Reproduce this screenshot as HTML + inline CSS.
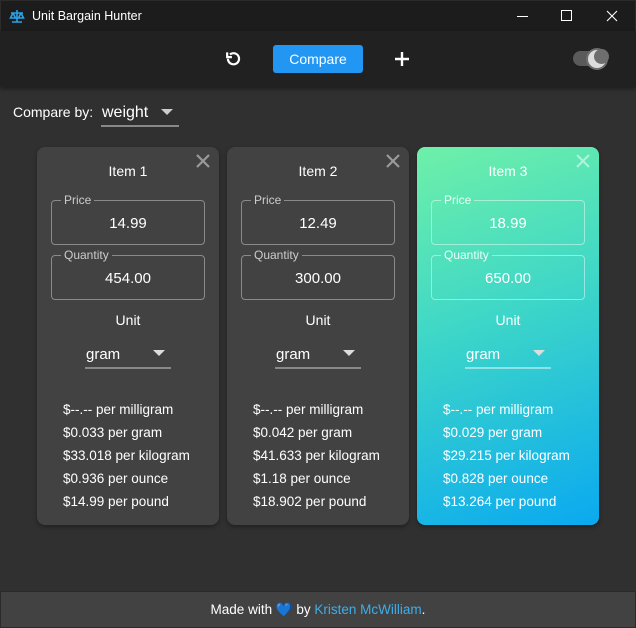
<!DOCTYPE html>
<html><head><meta charset="utf-8"><style>
*{box-sizing:border-box;margin:0;padding:0}
body{width:636px;height:628px;background:#303030;font-family:"Liberation Sans",sans-serif;color:#fff;position:relative;overflow:hidden}
.abs{position:absolute}
.title{left:0;top:0;width:636px;height:31px;background:#1c1c1c;border:1px solid #2b2b2b;border-bottom:none}
.tb{left:0;top:31px;width:636px;height:56px;background:#212121;box-shadow:0 2px 4px rgba(0,0,0,.4)}
.card{top:147px;width:182px;height:378px;background:#424242;border-radius:8px;box-shadow:0 2px 4px rgba(0,0,0,.35)}
.card.g{background:linear-gradient(160deg,#6ef0a8 0%,#3dd6c8 45%,#0aa9f0 100%)}
.card .h{position:absolute;top:16px;left:0;width:100%;text-align:center;font-size:14px}
.card .x{position:absolute;right:8px;top:6px;width:16px;height:16px}
fieldset.fld{position:absolute;left:14px;width:154px;height:51px;border:1px solid #8a8a8a;border-radius:4px;padding:0 8px;margin:0}
.g .fld{border-color:rgba(255,255,255,.45)}
.fld legend{font-size:12px;color:#ccc;padding:0 3px;line-height:12px;margin-left:1px}
.g .fld legend{color:#e8fff6}
.fld .v{position:absolute;top:9px;left:0;width:100%;text-align:center;font-size:15px}
.unit{position:absolute;top:165px;width:100%;text-align:center;font-size:14px}
.sel{position:absolute;left:48px;top:196px;width:86px;height:26px;border-bottom:2px solid #888;font-size:15px;padding-left:1px;padding-top:3px}
.g .sel{border-color:rgba(255,255,255,.45)}
.sel .ar{position:absolute;right:6px;top:7px;width:0;height:0;border-left:6px solid transparent;border-right:6px solid transparent;border-top:6px solid #ddd}
.res{position:absolute;left:26px;top:251px;font-size:13.5px;line-height:23px}
</style></head><body>
<div class="abs title">
 <svg class="abs" style="left:8px;top:8px" width="16" height="14" viewBox="0 0 16 14" fill="none" stroke="#2aa4ea" stroke-width="1.6"><path d="M8 1v12M3 13h10M2 4h12M4 4L1.5 9h5L4 4M12 4L9.5 9h5L12 4"/></svg>
 <div class="abs" style="left:31px;top:8px;font-size:12.5px">Unit Bargain Hunter</div>
 <div class="abs" style="left:516px;top:15px;width:11px;height:1px;background:#fff"></div>
 <div class="abs" style="left:560px;top:9px;width:11px;height:11px;border:1px solid #fff"></div>
 <svg class="abs" style="left:605px;top:9px" width="12" height="12" viewBox="0 0 12 12" stroke="#fff" stroke-width="1.1"><path d="M1 1l10 10M11 1L1 11"/></svg>
</div>
<div class="abs tb">
 <svg class="abs" style="left:224px;top:19px" width="19" height="19" viewBox="0 0 24 24" fill="none" stroke="#fff" stroke-width="2.8"><path d="M5 11a7 7 0 1 0 2.5-5.3"/><path d="M4 3v6h6" fill="none"/></svg>
 <div class="abs" style="left:273px;top:14px;width:90px;height:28px;background:#2196f3;border-radius:3px;text-align:center;line-height:28px;font-size:14px">Compare</div>
 <svg class="abs" style="left:394px;top:20px" width="16" height="16" stroke="#fff" stroke-width="2.4"><path d="M8 1v14M1 8h14"/></svg>
 <div class="abs" style="left:573px;top:20px;width:30px;height:15px;border-radius:8px;background:#5a5a5a"></div>
 <div class="abs" style="left:586px;top:17px;width:22px;height:22px;border-radius:50%;background:#6e6e6e"></div>
 <div class="abs" style="left:588px;top:19px;width:18px;height:18px;border-radius:50%;background:#ddd"></div>
 <div class="abs" style="left:594px;top:18px;width:15px;height:15px;border-radius:50%;background:#6e6e6e"></div>
</div>
<div class="abs" style="left:13px;top:104px;font-size:14px">Compare by:</div>
<div class="abs" style="left:101px;top:102px;width:78px;height:25px;border-bottom:2px solid #888;font-size:16px;padding-left:1px;padding-top:2px">weight<div class="abs" style="right:6px;top:7px;border-left:6px solid transparent;border-right:6px solid transparent;border-top:6px solid #ccc"></div></div>

<div class="abs card" style="left:37px">
 <div class="h">Item 1</div>
 <svg class="x" viewBox="0 0 16 16" stroke="#9a9a9a" stroke-width="2.2"><path d="M2 2l12 12M14 2L2 14"/></svg>
 <fieldset class="fld" style="top:47px"><legend>Price</legend><div class="v">14.99</div></fieldset>
 <fieldset class="fld" style="top:102px"><legend>Quantity</legend><div class="v">454.00</div></fieldset>
 <div class="unit">Unit</div>
 <div class="sel">gram<div class="ar"></div></div>
 <div class="res">$--.-- per milligram<br>$0.033 per gram<br>$33.018 per kilogram<br>$0.936 per ounce<br>$14.99 per pound</div>
</div>
<div class="abs card" style="left:227px">
 <div class="h">Item 2</div>
 <svg class="x" viewBox="0 0 16 16" stroke="#9a9a9a" stroke-width="2.2"><path d="M2 2l12 12M14 2L2 14"/></svg>
 <fieldset class="fld" style="top:47px"><legend>Price</legend><div class="v">12.49</div></fieldset>
 <fieldset class="fld" style="top:102px"><legend>Quantity</legend><div class="v">300.00</div></fieldset>
 <div class="unit">Unit</div>
 <div class="sel">gram<div class="ar"></div></div>
 <div class="res">$--.-- per milligram<br>$0.042 per gram<br>$41.633 per kilogram<br>$1.18 per ounce<br>$18.902 per pound</div>
</div>
<div class="abs card g" style="left:417px">
 <div class="h">Item 3</div>
 <svg class="x" viewBox="0 0 16 16" stroke="rgba(255,255,255,.5)" stroke-width="2.2"><path d="M2 2l12 12M14 2L2 14"/></svg>
 <fieldset class="fld" style="top:47px"><legend>Price</legend><div class="v">18.99</div></fieldset>
 <fieldset class="fld" style="top:102px"><legend>Quantity</legend><div class="v">650.00</div></fieldset>
 <div class="unit">Unit</div>
 <div class="sel">gram<div class="ar"></div></div>
 <div class="res">$--.-- per milligram<br>$0.029 per gram<br>$29.215 per kilogram<br>$0.828 per ounce<br>$13.264 per pound</div>
</div>

<div class="abs" style="left:0;top:591px;width:636px;height:37px;background:#424242;border:1px solid #2a2a2a;text-align:center;font-size:13.5px;line-height:36px">Made with <span style="color:#1e88e5">&#x1F499;</span> by <span style="color:#3daee9">Kristen McWilliam</span>.</div>
</body></html>
